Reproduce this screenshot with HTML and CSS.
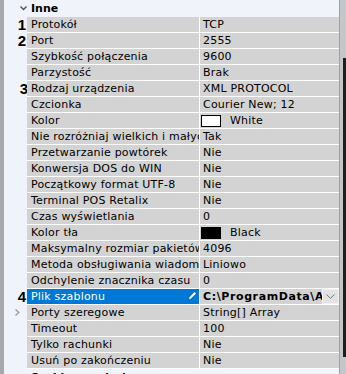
FILE: index.html
```html
<!DOCTYPE html>
<html lang="pl">
<head>
  <meta charset="UTF-8">
  <title>Właściwości</title>
  <link rel="stylesheet" href="styles.css">
</head>
<body>

  <div class="frame">
    <div class="strip"></div>

    <div class="grid">
      <div class="cat">
        <div class="margin">
          <svg class="toggle" width="7" height="5" viewBox="0 0 7 5"><path d="M0.5 0.5 L3.5 3.5 L6.5 0.5" fill="none" stroke="#4d4d4d" stroke-width="1.3"/></svg>
        </div>
        <div class="cat-name">Inne</div>
      </div>

      <div class="row"><div class="margin"><span class="num">1</span></div><div class="name">Protokół</div><div class="value">TCP</div></div>
      <div class="row"><div class="margin"><span class="num">2</span></div><div class="name">Port</div><div class="value">2555</div></div>
      <div class="row"><div class="margin"></div><div class="name">Szybkość połączenia</div><div class="value">9600</div></div>
      <div class="row"><div class="margin"></div><div class="name">Parzystość</div><div class="value">Brak</div></div>
      <div class="row"><div class="margin"><span class="num num3">3</span></div><div class="name">Rodzaj urządzenia</div><div class="value">XML PROTOCOL</div></div>
      <div class="row"><div class="margin"></div><div class="name">Czcionka</div><div class="value">Courier New; 12</div></div>
      <div class="row"><div class="margin"></div><div class="name">Kolor</div><div class="value"><span class="swatch white"></span>White</div></div>
      <div class="row"><div class="margin"></div><div class="name">Nie rozróżniaj wielkich i małyc</div><div class="value">Tak</div></div>
      <div class="row"><div class="margin"></div><div class="name">Przetwarzanie powtórek</div><div class="value">Nie</div></div>
      <div class="row"><div class="margin"></div><div class="name">Konwersja DOS do WIN</div><div class="value">Nie</div></div>
      <div class="row"><div class="margin"></div><div class="name">Początkowy format UTF-8</div><div class="value">Nie</div></div>
      <div class="row"><div class="margin"></div><div class="name">Terminal POS Retalix</div><div class="value">Nie</div></div>
      <div class="row"><div class="margin"></div><div class="name">Czas wyświetlania</div><div class="value">0</div></div>
      <div class="row"><div class="margin"></div><div class="name">Kolor tła</div><div class="value"><span class="swatch black"></span>Black</div></div>
      <div class="row"><div class="margin"></div><div class="name">Maksymalny rozmiar pakietów</div><div class="value">4096</div></div>
      <div class="row"><div class="margin"></div><div class="name">Metoda obsługiwania wiadomo</div><div class="value">Liniowo</div></div>
      <div class="row"><div class="margin"></div><div class="name">Odchylenie znacznika czasu</div><div class="value">0</div></div>
      <div class="row selected">
        <div class="margin"><span class="num">4</span></div>
        <div class="name">
          <span class="label">Plik szablonu</span>
          <svg class="pencil" width="9" height="9" viewBox="0 0 9 9"><path d="M1 8 L1.6 6 L6.6 1 L8 2.4 L3 7.4 Z" fill="#fff"/></svg>
        </div>
        <div class="value">
          <span class="path">C:\ProgramData\A</span>
          <span class="drop"><svg width="9" height="5" viewBox="0 0 9 5"><path d="M0.5 0.5 L4.5 4.3 L8.5 0.5" fill="none" stroke="#7a7a7a" stroke-width="1"/></svg></span>
        </div>
      </div>
      <div class="row">
        <div class="margin"><svg class="expand" width="5" height="7" viewBox="0 0 5 7"><path d="M0.5 0.5 L3.8 3.5 L0.5 6.5" fill="none" stroke="#9a9a9a" stroke-width="1.3"/></svg></div>
        <div class="name">Porty szeregowe</div><div class="value">String[] Array</div>
      </div>
      <div class="row"><div class="margin"></div><div class="name">Timeout</div><div class="value">100</div></div>
      <div class="row"><div class="margin"></div><div class="name">Tylko rachunki</div><div class="value">Nie</div></div>
      <div class="row"><div class="margin"></div><div class="name">Usuń po zakończeniu</div><div class="value">Nie</div></div>

      <div class="cat">
        <div class="margin"></div>
        <div class="cat-name">Szablon wydruku</div>
      </div>
    </div>

    <div class="edge">
      <div class="edge-top"></div>
      <div class="edge-mid"></div>
    </div>
  </div>

</body>
</html>
```

FILE: styles.css
```css
html {
  box-sizing: border-box;
  background: #f0f4fa;
}

*, *:before, *:after {
  box-sizing: inherit;
}

body {
  margin: 0;
  height: 374px;
  overflow: hidden;
  font-family: "DejaVu Sans", Verdana, sans-serif;
  font-size: 11px;
  color: #000;
}

.frame {
  display: flex;
  height: 374px;
}

.strip {
  width: 4px;
  background: #a9a9ad;
}

.grid {
  width: 335px;
  display: flex;
  flex-direction: column;
}

.cat {
  display: flex;
  height: 17px;
  flex: none;
  background: #f0f4fa;
}

.cat .margin {
  width: 23px;
  display: flex;
  padding: 6px 0 0 7px;
}

.cat-name {
  font-weight: bold;
  line-height: 17px;
  padding-left: 4px;
}

.row {
  display: flex;
  height: 16px;
  flex: none;
}

.margin {
  width: 23px;
  flex: none;
  background: #f0f4fa;
  display: flex;
  justify-content: flex-end;
  padding-right: 1px;
}

.num {
  font-family: "Liberation Sans", Arial, sans-serif;
  font-weight: bold;
  font-size: 15px;
  line-height: 16px;
}

.num3 {
  margin-right: -2px;
}

.expand {
  margin: 4px 6px 0 0;
}

.name, .value {
  height: 16px;
  line-height: 15px;
  background: #d3d3d3;
  border-bottom: 1px solid #fff;
  white-space: nowrap;
  overflow: hidden;
  letter-spacing: 0.2px;
}

.name {
  width: 173px;
  padding-left: 4px;
  border-right: 1px solid #fff;
}

.value {
  width: 139px;
  padding-left: 3px;
  display: flex;
  align-items: center;
}

.swatch {
  width: 20px;
  height: 12px;
  border: 1px solid #000;
  margin: 0 9px 0 -2px;
}

.swatch.white {
  background: #fff;
}

.swatch.black {
  background: #000;
}

.selected .name {
  background: #0078d7;
  color: #fff;
  display: flex;
  justify-content: space-between;
  align-items: center;
  padding-right: 2px;
}

.pencil {
  margin-top: -2px;
}

.selected .value {
  padding-right: 0;
}

.path {
  flex: 1;
  overflow: hidden;
  font-weight: bold;
  letter-spacing: 0.6px;
}

.drop {
  width: 17px;
  height: 15px;
  flex: none;
  background: #e3e3e3;
  border: 1px solid #f2f2f2;
  display: flex;
  align-items: center;
  justify-content: center;
}

.grid > .cat:last-child {
  height: 20px;
}

.edge {
  width: 7px;
  display: flex;
  flex-direction: column;
  border-left: 1px solid #a0a0a0;
  background: #c6c6c8;
}

.edge-top {
  height: 58px;
}

.edge-mid {
  height: 299px;
  margin-left: 3px;
  background: #1e1e1e;
}
```
